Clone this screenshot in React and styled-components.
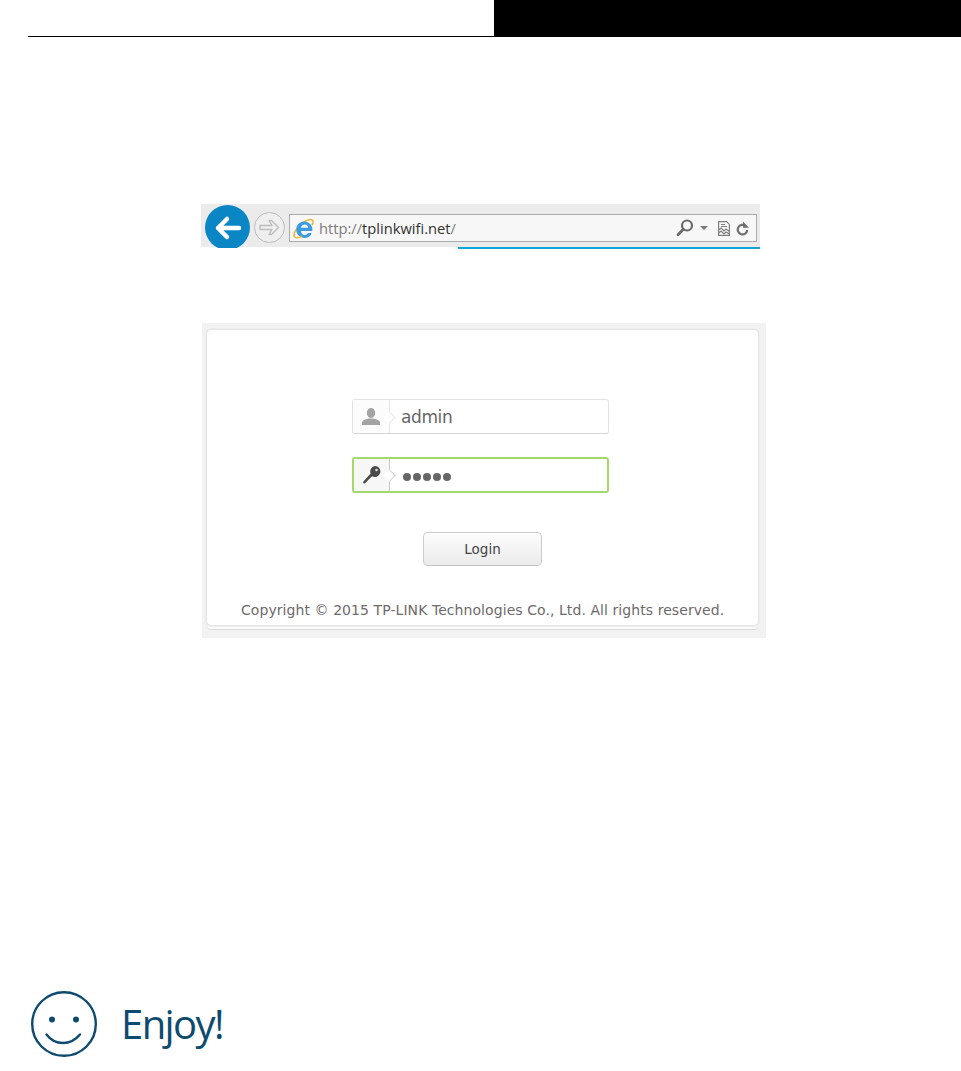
import React from 'react';
import styled, { createGlobalStyle } from 'styled-components';

const Global = createGlobalStyle`
  html, body { margin: 0; padding: 0; background: #fff; }
`;

const Page = styled.div`
  width: 961px;
  height: 1071px;
  display: flex;
  flex-direction: column;
  overflow: hidden;
  font-family: "Open Sans", sans-serif;
`;

const Header = styled.header`
  display: flex;
  height: 37px;
  padding-left: 28px;
  flex-shrink: 0;
`;
const HeaderLeft = styled.div`
  width: 466px;
  border-bottom: 1px solid #000;
`;
const HeaderRight = styled.div`
  flex: 1;
  background: #000;
`;

const BrowserBar = styled.div`
  position: relative;
  width: 559px;
  height: 45px;
  margin: 167px 0 0 201px;
  background: linear-gradient(#ebebeb, #ebebeb) top / 100% 43px no-repeat;
  display: flex;
  align-items: flex-start;
  flex-shrink: 0;
  overflow: hidden;
`;
const LoadLine = styled.div`
  position: absolute;
  left: 257px;
  right: 0;
  bottom: 0;
  height: 2px;
  background: #0ea5dc;
`;
const BackButton = styled.div`
  width: 45px;
  height: 45px;
  margin: 1px 0 0 4px;
  flex-shrink: 0;
  border-radius: 50%;
  background: #0a86c4;
  clip-path: inset(0 0 2px 0);
  display: flex;
  align-items: center;
  justify-content: center;
`;
const ForwardButton = styled.div`
  width: 31px;
  height: 31px;
  box-sizing: border-box;
  margin: 8px 0 0 4px;
  flex-shrink: 0;
  border-radius: 50%;
  border: 1px solid #bcbcbc;
  background: #efefef;
  display: flex;
  align-items: center;
  justify-content: center;
`;
const AddressBox = styled.div`
  width: 468px;
  height: 28px;
  box-sizing: border-box;
  margin: 10px 0 0 4px;
  border: 1px solid #ababab;
  background: #f7f7f7;
  display: flex;
  align-items: center;
  padding: 0 7px 0 3px;
`;
const UrlText = styled.span`
  margin-left: 5px;
  font: 14.7px "Open Sans", sans-serif;
  color: #7d7d7d;
  flex: 1;
`;
const UrlHost = styled.span`
  color: #333;
`;
const ToolIcons = styled.div`
  display: flex;
  align-items: center;
`;
const Tool = styled.span`
  display: flex;
  margin-left: ${p => p.$ml}px;
`;

const Panel = styled.section`
  width: 564px;
  height: 315px;
  margin: 74px 0 0 202px;
  box-sizing: border-box;
  padding: 6px 7px 12px 4px;
  background: #f2f2f2;
  flex-shrink: 0;
`;
const Card = styled.div`
  height: 297px;
  box-sizing: border-box;
  background: #fff;
  border: 1px solid #e6e6e6;
  border-radius: 5px;
  box-shadow: 0 0 0 1px #ededed, 0 4px 0 -1px #fbfbfb, 0 5px 0 -1px #dcdcdc;
  display: flex;
  flex-direction: column;
  align-items: flex-start;
  padding-top: 69px;
`;
const Field = styled.div`
  width: 257px;
  height: ${p => (p.$focus ? 36 : 35)}px;
  box-sizing: border-box;
  display: flex;
  align-items: stretch;
  border-radius: 3px;
  border: ${p => (p.$focus ? '2px solid #a5d86a' : '1px solid #e2e2e2')};
  border-bottom-color: ${p => (p.$focus ? '#a5d86a' : '#d6d6d6')};
  margin: 0 0 ${p => p.$gap}px 145px;
`;
const FieldIcon = styled.div`
  position: relative;
  width: ${p => (p.$focus ? 35 : 36)}px;
  flex-shrink: 0;
  background: ${p => (p.$focus ? '#f7f7f7' : '#fcfcfc')};
  border-right: 1px solid ${p => (p.$focus ? '#c8c8c8' : '#e6e6e6')};
  display: flex;
  align-items: center;
  justify-content: center;
  &::after {
    content: '';
    position: absolute;
    right: -5px;
    top: 50%;
    width: 8px;
    height: 8px;
    margin-top: -4px;
    background: #fff;
    border-top: 1px solid ${p => (p.$focus ? '#d0d0d0' : '#e6e6e6')};
    border-right: 1px solid ${p => (p.$focus ? '#d0d0d0' : '#e6e6e6')};
    transform: rotate(45deg);
  }
`;
const FieldValue = styled.div`
  padding-left: ${p => p.$pad}px;
  padding-top: ${p => p.$top || 0}px;
  font: 17px "DejaVu Sans", sans-serif;
  letter-spacing: -0.4px;
  color: #666;
  display: flex;
  align-items: center;
  gap: 2px;
`;
const Dot = styled.span`
  width: 8px;
  height: 8px;
  border-radius: 50%;
  background: #666;
`;
const LoginButton = styled.div`
  width: 119px;
  height: 34px;
  box-sizing: border-box;
  margin: 0 0 0 216px;
  border: 1px solid #cbcbcb;
  border-bottom-color: #c2c2c2;
  border-radius: 5px;
  background: linear-gradient(#fdfdfd, #ebebeb);
  font: 13.5px "DejaVu Sans", sans-serif;
  color: #444;
  display: flex;
  align-items: center;
  justify-content: center;
`;
const Copyright = styled.div`
  margin: 35px 0 0 34px;
  font: 14px/18px "DejaVu Sans", sans-serif;
  color: #6e6a6a;
  white-space: nowrap;
  letter-spacing: 0.07px;
`;

const Footer = styled.footer`
  margin: auto 0 14px 31px;
  display: flex;
  align-items: center;
  gap: 24px;
`;
const EnjoyText = styled.div`
  font: 500 40px/50px "Open Sans", sans-serif;
  color: #0d4a70;
  letter-spacing: -1.6px;
`;

const BackIcon = () => (
  <svg width="30" height="26" viewBox="0 0 30 26" fill="none" stroke="#fff" strokeWidth="4.5" strokeLinecap="round" strokeLinejoin="round">
    <path d="M26 13H5M14 4l-9 9 9 9" />
  </svg>
);
const ForwardIcon = () => (
  <svg width="21" height="17" viewBox="0 0 21 17" fill="none" stroke="#bdbdbd" strokeWidth="1.4" strokeLinejoin="round">
    <path d="M1 6.500h12L10 1.500h2.500L19.500 8.500 12.500 15.500H10l3-5H1z" />
  </svg>
);
const IeIcon = () => (
  <svg width="21" height="21" viewBox="0 0 21 21">
    <path d="M1.500 19C-.5 16 4 9 9.500 5c4.500-3.200 8.500-4 10-2.700 1 1 .5 3-.5 5" fill="none" stroke="#e9b52c" strokeWidth="1.500" />
    <path d="M11 3.500a8 8 0 0 1 8.200 9.500H8c.2 2.700 1.700 4 3.700 4 1.600 0 2.800-.7 3.400-2h3.600c-1 3.200-3.800 5-7.200 5C7 20 3.300 16.500 3.300 11.800S6.500 3.500 11 3.500zM8 9.800h7.200C15 7.700 13.500 6.500 11.700 6.500S8.300 7.700 8 9.800z" fill="#3b9bdf" fillRule="evenodd" />
    <path d="M1.500 19c1.500 1.500 5 .8 7.500-.8" fill="none" stroke="#e9b52c" strokeWidth="1.500" />
  </svg>
);
const SearchIcon = () => (
  <svg width="18" height="18" viewBox="0 0 18 18" fill="none" stroke="#6a6a6a">
    <circle cx="11" cy="6.500" r="5" strokeWidth="2.200" />
    <path d="M7.300 10.300 2 15.700" strokeWidth="2.800" strokeLinecap="round" />
  </svg>
);
const CaretIcon = () => (
  <svg width="8" height="4" viewBox="0 0 8 4"><path d="M0 0h8L4 4z" fill="#777" /></svg>
);
const CompatIcon = () => (
  <svg width="12" height="15" viewBox="0 0 12 15" fill="none" stroke="#808080" strokeWidth="1.200">
    <path d="M.6.600h8l2.800 2.800v11H.6z" />
    <path d="M3 3.500h4M3 5.500h6" strokeWidth="1" />
    <path d="M.6 9 3 7l3 3 2-2 3.400 2.500M.6 12 3 10l3 3 2-2 3.400 2" />
  </svg>
);
const RefreshIcon = () => (
  <svg width="13" height="15" viewBox="0 0 13 15" fill="none">
    <path d="M9.700 5A4.800 4.800 0 1 0 11.300 9" stroke="#6f6f6f" strokeWidth="2.200" />
    <path d="M7 .5v6.300h6z" fill="#6f6f6f" />
  </svg>
);
const UserIcon = () => (
  <svg width="18" height="17" viewBox="0 0 18 17" fill="#a3a3a3">
    <ellipse cx="9" cy="5" rx="4.200" ry="5" />
    <path d="M0 17v-2.500c0-2 3-3 6-4h6c3 1 6 2 6 4V17z" />
  </svg>
);
const KeyIcon = () => (
  <svg width="19" height="18" viewBox="0 0 19 18">
    <path d="M13 0a5.500 5.500 0 1 1-3 10.200L2.800 17.500 1.500 17.300 1 16l7.600-8.600A5.500 5.500 0 0 1 13 0z" fill="#4a4a4a" />
    <circle cx="14.500" cy="4" r="1.300" fill="#ddd" />
  </svg>
);
const SmileIcon = () => (
  <svg width="66" height="66" viewBox="0 0 66 66" fill="none" stroke="#0d4a70">
    <circle cx="33" cy="33" r="31.800" strokeWidth="2.400" />
    <circle cx="21" cy="28.500" r="3" fill="#0d4a70" stroke="none" />
    <circle cx="45" cy="28.500" r="3" fill="#0d4a70" stroke="none" />
    <path d="M15.500 43.500C20 49.500 26 52 32 52s12-2.500 17-8.500" strokeWidth="2.400" strokeLinecap="round" />
  </svg>
);

export default function App() {
  return (
    <Page>
      <Global />
      <Header>
        <HeaderLeft />
        <HeaderRight />
      </Header>

      <BrowserBar>
        <BackButton><BackIcon /></BackButton>
        <ForwardButton><ForwardIcon /></ForwardButton>
        <AddressBox>
          <IeIcon />
          <UrlText>http://<UrlHost>tplinkwifi.net</UrlHost>/</UrlText>
          <ToolIcons>
            <Tool $ml={0}><SearchIcon /></Tool>
            <Tool $ml={6}><CaretIcon /></Tool>
            <Tool $ml={10}><CompatIcon /></Tool>
            <Tool $ml={6}><RefreshIcon /></Tool>
          </ToolIcons>
        </AddressBox>
        <LoadLine />
      </BrowserBar>

      <Panel>
        <Card>
          <Field $gap={23}>
            <FieldIcon><UserIcon /></FieldIcon>
            <FieldValue $pad={11}>admin</FieldValue>
          </Field>
          <Field $focus $gap={39}>
            <FieldIcon $focus><KeyIcon /></FieldIcon>
            <FieldValue $pad={13} $top={3}><Dot /><Dot /><Dot /><Dot /><Dot /></FieldValue>
          </Field>
          <LoginButton>Login</LoginButton>
          <Copyright>Copyright © 2015 TP-LINK Technologies Co., Ltd. All rights reserved.</Copyright>
        </Card>
      </Panel>

      <Footer>
        <SmileIcon />
        <EnjoyText>Enjoy!</EnjoyText>
      </Footer>
    </Page>
  );
}
